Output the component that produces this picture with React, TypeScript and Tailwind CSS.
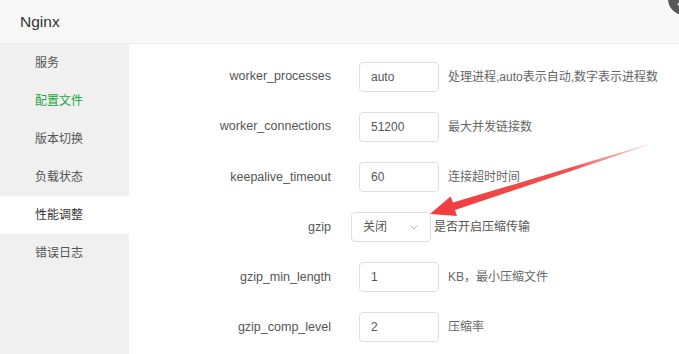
import React from 'react';

const menu = ['服务', '配置文件', '版本切换', '负载状态', '性能调整', '错误日志'];

interface Row {
  name: string;
  value: string;
  help: string;
  select?: boolean;
}

const rows: Row[] = [
  { name: 'worker_processes', value: 'auto', help: '处理进程,auto表示自动,数字表示进程数' },
  { name: 'worker_connections', value: '51200', help: '最大并发链接数' },
  { name: 'keepalive_timeout', value: '60', help: '连接超时时间' },
  { name: 'gzip', value: '关闭', help: '是否开启压缩传输', select: true },
  { name: 'gzip_min_length', value: '1', help: 'KB，最小压缩文件' },
  { name: 'gzip_comp_level', value: '2', help: '压缩率' },
];

export default function App() {
  return (
    <div
      className="relative w-[679px] h-[354px] overflow-hidden bg-white text-[#555]"
      style={{ fontFamily: '"Liberation Sans", "Noto Sans CJK SC", sans-serif' }}
    >
      {/* Header */}
      <div className="h-[44px] bg-[#f8f8f8] border-b border-[#ececec] flex items-center pl-[20px]">
        <span className="text-[15.5px] text-[#333]">Nginx</span>
      </div>

      <div className="flex h-[310px]">
        {/* Sidebar */}
        <div className="w-[129px] bg-[#f0f0f0] flex flex-col">
          {menu.map((item) => (
            <div
              key={item}
              className={`h-[38px] flex items-center pl-[35px] text-[12px] ${
                item === '性能调整' ? 'bg-white text-[#333]' : item === '配置文件' ? 'text-[#20a53a]' : 'text-[#555]'
              }`}
            >
              {item}
            </div>
          ))}
        </div>

        {/* Form */}
        <div className="flex-1 flex flex-col gap-[20.2px] pt-[17.5px]">
          {rows.map((row) => (
            <div key={row.name} className="flex items-center h-[30px]">
              <div className="w-[202px] text-right text-[12.5px] text-[#555]">{row.name}</div>
              {row.select ? (
                <>
                  <div className="ml-[20px] w-[80px] h-[30px] border border-[#dcdfe6] rounded-[4px] flex items-center justify-between pl-[11px] pr-[11px] text-[12px] text-[#555]">
                    <span>{row.value}</span>
                    <svg className="w-[10px] h-[10px]" viewBox="0 0 10 10" fill="none" stroke="#b8bcc4" strokeWidth={1}>
                      <path d="M1.5 3.5 L5 7 L8.5 3.5" />
                    </svg>
                  </div>
                  <span className="ml-[3px] text-[12px] text-[#555]">{row.help}</span>
                </>
              ) : (
                <>
                  <div className="ml-[28px] w-[80px] h-[30px] border border-[#dcdfe6] rounded-[4px] flex items-center pl-[11px] text-[12px] text-[#555]">
                    {row.value}
                  </div>
                  <span className="ml-[9px] text-[12px] text-[#666]">{row.help}</span>
                </>
              )}
            </div>
          ))}
        </div>
      </div>

      {/* Close button */}
      <div className="absolute left-[666px] top-[-19px] w-[36px] h-[36px] rounded-full bg-[#585858] border-[2px] border-white flex items-center justify-center">
        <svg className="w-[16px] h-[16px]" viewBox="0 0 16 16" stroke="white" strokeWidth={2}>
          <path d="M2 14 L14 2 M2 2 L14 14" />
        </svg>
      </div>

      {/* Annotation arrow */}
      <svg className="absolute inset-0 pointer-events-none" width="679" height="354" viewBox="0 0 679 354">
        <defs>
          <linearGradient id="arrowFade" x1="647" y1="145" x2="430" y2="214" gradientUnits="userSpaceOnUse">
            <stop offset="0" stopColor="#f03c3c" stopOpacity="0.15" />
            <stop offset="0.35" stopColor="#f03c3c" stopOpacity="0.9" />
            <stop offset="1" stopColor="#f03c3c" />
          </linearGradient>
        </defs>
        <polygon
          points="647,144.5 453,202.6 450.5,196.5 430,214 457,216 455,209.9 647,145.6"
          fill="url(#arrowFade)"
        />
      </svg>
    </div>
  );
}
